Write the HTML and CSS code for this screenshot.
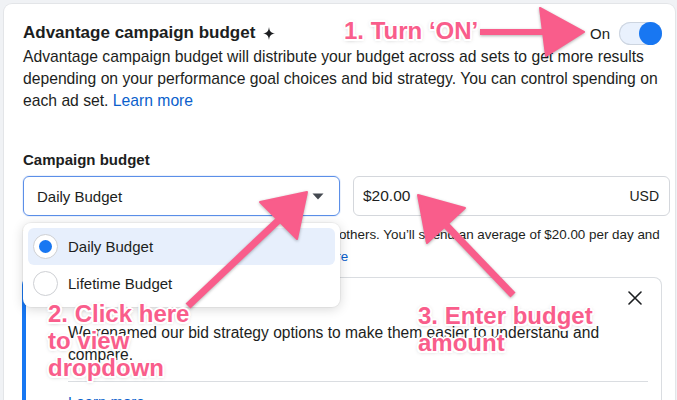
FILE: index.html
```html
<!DOCTYPE html>
<html lang="en">
<head>
<meta charset="utf-8">
<title>Advantage campaign budget</title>
<link rel="stylesheet" href="styles.css">
</head>
<body>
<div class="page">
  <div class="card">
    <div class="header">
      <h2 class="title">Advantage campaign budget
        <svg class="spark" width="12" height="13" viewBox="0 0 12 13"><path d="M6 0 C6.6 4.2 7.6 5.6 12 6.5 C7.6 7.4 6.6 8.8 6 13 C5.4 8.8 4.4 7.4 0 6.5 C4.4 5.6 5.4 4.2 6 0Z" fill="#1c1e21"/></svg>
      </h2>
      <div class="toggle-group">
        <span>On</span>
        <span class="switch"><span class="knob"></span></span>
      </div>
    </div>
    <p class="desc">Advantage campaign budget will distribute your budget across ad sets to get more results depending on your performance goal choices and bid strategy. You can control spending on each ad set. <a href="#">Learn more</a></p>

    <div class="label">Campaign budget</div>
    <div class="fields">
      <div class="select-wrap">
        <div class="select">
          <span>Daily Budget</span>
          <svg width="12" height="7" viewBox="0 0 12 7"><path d="M0.5 0.5 H11.5 L6 6.5Z" fill="#444950"/></svg>
        </div>
        <div class="menu">
          <div class="item active"><span class="radio"><span class="dot"></span></span><span>Daily Budget</span></div>
          <div class="item"><span class="radio"></span><span>Lifetime Budget</span></div>
        </div>
      </div>
      <div class="amount"><span>$20.00</span><span class="cur">USD</span></div>
    </div>
    <p class="helper">Your actual spend may be higher on some days than others. You’ll spend an average of $20.00 per day and a maximum of $140.00 per calendar week. <a href="#">Learn more</a></p>

    <div class="notice">
      <svg class="info" width="16" height="16" viewBox="0 0 16 16"><circle cx="8" cy="8" r="8" fill="#1877f2"/><rect x="7" y="7" width="2" height="5" fill="#fff"/><circle cx="8" cy="4.6" r="1.1" fill="#fff"/></svg>
      <div class="notice-body">
        <div class="notice-head">
          <span class="notice-title">Updated bid strategy naming</span>
          <svg width="14" height="14" viewBox="0 0 14 14"><path d="M1 1 L13 13 M13 1 L1 13" stroke="#1c1e21" stroke-width="1.6" stroke-linecap="round"/></svg>
        </div>
        <p class="notice-text">We renamed our bid strategy options to make them easier to understand and compare.</p>
        <div class="divider"></div>
        <a class="notice-link" href="#">Learn more</a>
      </div>
    </div>
  </div>

  <svg class="arrows" width="677" height="400" viewBox="0 0 677 400">
    <g fill="#f95d8b" stroke="#f95d8b" stroke-linejoin="round">
      <line x1="480" y1="32" x2="548" y2="32" stroke-width="6"/>
      <polygon points="540,8 584,32 546,56" stroke-width="2"/>
      <line x1="188" y1="306" x2="282" y2="217" stroke-width="7"/>
      <polygon points="307,192 260,202 297,239" stroke-width="2"/>
      <line x1="513" y1="295" x2="444" y2="223" stroke-width="7"/>
      <polygon points="418,195 465,208 427,243" stroke-width="2"/>
    </g>
  </svg>

  <div class="anno a1">1. Turn ‘ON’</div>
  <div class="anno a2">2. Click here<br>to view<br>dropdown</div>
  <div class="anno a3">3. Enter budget<br>amount</div>
</div>
</body>
</html>
```

FILE: styles.css
```css
html, body {
  margin: 0;
  padding: 0;
}
body {
  background: #f0f2f5;
  font-family: "Liberation Sans", Arial, Helvetica, sans-serif;
  color: #1c1e21;
  width: 677px;
  height: 400px;
  overflow: hidden;
}
.page {
  position: relative;
  box-sizing: border-box;
  width: 677px;
  height: 400px;
  padding: 4px 2px 0 4px;
  overflow: hidden;
}
.card {
  background: #fff;
  border-radius: 8px;
  padding: 17px 5px 0 19px;
  height: 600px;
  box-shadow: 0 0 0 1px rgba(0, 0, 0, 0.05);
}
.header {
  display: flex;
  align-items: center;
  justify-content: space-between;
  height: 24px;
  padding-right: 8px;
}
.title {
  margin: 0;
  font-size: 17px;
  font-weight: 700;
  line-height: 24px;
  display: flex;
  align-items: center;
  gap: 8px;
}
.spark {
  display: block;
}
.toggle-group {
  display: flex;
  align-items: center;
  gap: 9px;
  font-size: 15px;
}
.switch {
  display: flex;
  justify-content: flex-end;
  width: 43px;
  height: 23px;
  border-radius: 12px;
  background: #e9f1fd;
  box-shadow: inset 0 0 0 1px #cdd5e0;
}
.knob {
  width: 23px;
  height: 23px;
  border-radius: 50%;
  background: #1877f2;
}
.desc {
  margin: 0;
  font-size: 15.7px;
  line-height: 22px;
  padding-top: 1px;
}
a {
  color: #0b5fcc;
  text-decoration: none;
}
.label {
  margin-top: 38px;
  font-size: 15px;
  font-weight: 700;
  line-height: 20px;
}
.fields {
  display: grid;
  grid-template-columns: 1fr 1fr;
  gap: 13px;
  margin-top: 6px;
}
.select-wrap {
  position: relative;
}
.select, .amount {
  box-sizing: border-box;
  height: 40px;
  border-radius: 6px;
  display: flex;
  align-items: center;
  justify-content: space-between;
  font-size: 15px;
}
.select {
  border: 1px solid #5b8fe8;
  box-shadow: 0 0 0 1px rgba(91, 143, 232, 0.12);
  padding: 0 15px 0 13px;
}
.select svg {
  display: block;
}
.amount {
  border: 1px solid #d4d7dc;
  padding: 0 10px 0 9px;
}
.amount span:first-child {
  font-size: 15.5px;
}
.cur {
  font-size: 14px;
}
.menu {
  position: absolute;
  top: 47px;
  left: 0;
  width: 317px;
  box-sizing: border-box;
  background: #fff;
  border-radius: 8px;
  box-shadow: 0 2px 12px rgba(0, 0, 0, 0.16), 0 0 0 1px rgba(0, 0, 0, 0.04);
  padding: 5px;
  z-index: 2;
}
.item {
  height: 37px;
  display: flex;
  align-items: center;
  gap: 10px;
  padding-left: 5px;
  border-radius: 6px;
  font-size: 15px;
}
.item.active {
  background: #e7effc;
}
.radio {
  box-sizing: border-box;
  width: 25px;
  height: 25px;
  border-radius: 50%;
  border: 1px solid #ced0d4;
  background: #fff;
  display: flex;
  align-items: center;
  justify-content: center;
}
.dot {
  width: 13px;
  height: 13px;
  border-radius: 50%;
  background: #1877f2;
}
.helper {
  margin: 8px 0 0;
  font-size: 13.4px;
  line-height: 22px;
}
.notice {
  margin: 9px 8px 0 -1px;
  border: 1px solid #dadde1;
  border-left: 4px solid #1877f2;
  border-radius: 8px;
  display: flex;
  align-items: flex-start;
  gap: 14px;
  padding: 10px 13px 0 12px;
}
.info {
  display: block;
  margin-top: 2px;
  flex: none;
}
.notice-body {
  flex: 1;
}
.notice-head {
  display: flex;
  align-items: center;
  justify-content: space-between;
  line-height: 20px;
  padding-right: 6px;
}
.notice-title {
  font-size: 15px;
  font-weight: 700;
}
.notice-text {
  margin: 14px 0 0;
  font-size: 15.6px;
  line-height: 22px;
}
.divider {
  margin-top: 15px;
  height: 1px;
  background: #dadde1;
}
.notice-link {
  display: block;
  margin-top: 9px;
  font-size: 15px;
  line-height: 22px;
}
.arrows {
  position: absolute;
  left: 0;
  top: 0;
  z-index: 3;
  filter: drop-shadow(0 1px 1.5px rgba(0, 0, 0, 0.3));
}
.anno {
  position: absolute;
  z-index: 4;
  font-family: "Liberation Sans", Arial, sans-serif;
  font-weight: 700;
  font-size: 24px;
  line-height: 27px;
  color: #f95d8b;
  white-space: nowrap;
  text-shadow:
    2px 0 0 #fff, -2px 0 0 #fff, 0 2px 0 #fff, 0 -2px 0 #fff,
    1.5px 1.5px 0 #fff, -1.5px -1.5px 0 #fff, 1.5px -1.5px 0 #fff, -1.5px 1.5px 0 #fff,
    0 1px 4px rgba(0, 0, 0, 0.35);
}
.a1 {
  left: 344px;
  top: 17px;
}
.a2 {
  left: 48px;
  top: 300px;
}
.a3 {
  left: 418px;
  top: 302px;
}
```
